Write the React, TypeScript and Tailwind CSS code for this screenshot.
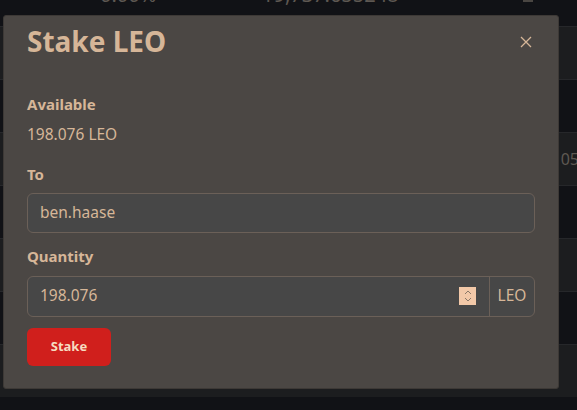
import React from "react";

const font = { fontFamily: '"Noto Sans", "Open Sans", sans-serif' };

export default function App() {
  const rows = [0, 1, 2, 3, 4, 5, 6];
  return (
    <div className="relative w-[577px] h-[410px] overflow-hidden bg-[#111216]" style={font}>
      <div className="flex flex-col">
        <div className="h-[26px] relative text-[#5e5852] text-[20px] leading-none">
          <span className="absolute left-[100px] -top-[15px]">0.00%</span>
          <span className="absolute left-[262px] -top-[15px]">19,737.655248</span>
          <span className="absolute left-[523px] -top-[4px] w-[10px] h-[6px] bg-[#4a4642]"></span>
        </div>
        {rows.map((i) => (
          <div
            key={i}
            className={`h-[53px] border-t border-[#26272a] flex items-center justify-end ${
              i % 2 === 0 ? "bg-[#1c1d1f]" : "bg-[#111216]"
            }`}
          >
            {i === 2 && <span className="text-[#5e5852] text-[16px] -mr-[2px]">05</span>}
          </div>
        ))}
      </div>

      <div className="absolute left-[3px] top-[15px] w-[556px] h-[374px] rounded-[3px] bg-[#4b4744] border border-[#3d3936] px-[23px] text-[#d6b698]">
        <div className="flex items-center justify-between h-[50px]">
          <h1 className="text-[28px] font-bold leading-none">Stake LEO</h1>
          <svg width="12" height="12" viewBox="0 0 12 12" className="mr-[3px] mt-[2px]">
            <path d="M1 1L11 11M11 1L1 11" stroke="#d6b698" strokeWidth="1.3" />
          </svg>
        </div>
        <div className="mt-[31px] text-[15px] font-bold leading-none">Available</div>
        <div className="mt-[15px] text-[15.5px] leading-none">198.076 LEO</div>
        <div className="mt-[24px] text-[15px] font-bold leading-none">To</div>
        <div className="mt-[11px] h-[40px] w-[508px] rounded-[6px] border border-[#6b6058] bg-[#474747] flex items-center px-3 text-[15.5px]">
          ben.haase
        </div>
        <div className="mt-[16px] text-[15px] font-bold leading-none">Quantity</div>
        <div className="mt-[12px] h-[41px] w-[508px] rounded-[6px] border border-[#6b6058] bg-[#474747] flex items-stretch text-[15.5px]">
          <div className="flex-1 flex items-center pl-3 pr-[13px] justify-between">
            <span>198.076</span>
            <span className="w-[17px] h-[18px] bg-[#f2c8a8] flex items-center justify-center">
              <svg width="8" height="14" viewBox="0 0 8 14">
                <path d="M1 5L4 2L7 5M1 9L4 12L7 9" stroke="#8a7868" strokeWidth="1" fill="none" />
              </svg>
            </span>
          </div>
          <div className="w-[45px] border-l border-[#6b6058] flex items-center justify-center">LEO</div>
        </div>
        <button className="mt-[11px] h-[38px] w-[84px] rounded-[6px] bg-[#d01f1c] text-[#f6dcc0] text-[13px] font-bold">
          Stake
        </button>
      </div>
    </div>
  );
}
